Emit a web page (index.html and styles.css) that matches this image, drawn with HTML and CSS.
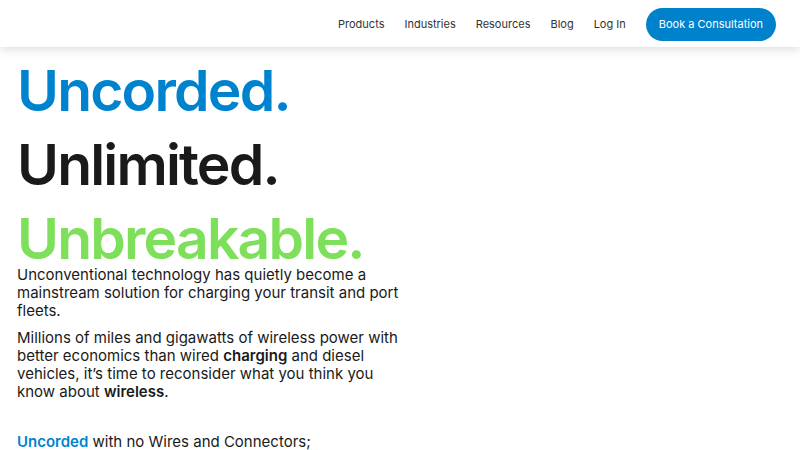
FILE: index.html
```html
<!DOCTYPE html>
<html lang="en">
    <head>
        <meta charset="UTF-8">
        <meta name="viewport" content="width=device-width, initial-scale=1.0">
        <title>Uncorded. Unlimited. Unbreakable.</title>
        <link rel="stylesheet" href="styles.css">
    </head>
    <body>
        <header class="site-header">
            <nav class="main-nav">
                <a href="#" class="nav-link">Products</a>
                <a href="#" class="nav-link">Industries</a>
                <a href="#" class="nav-link">Resources</a>
                <a href="#" class="nav-link">Blog</a>
                <a href="#" class="nav-link">Log In</a>
                <a href="#" class="btn-consult">Book a Consultation</a>
            </nav>
        </header>
        <main class="hero">
            <h1 class="hero-title">
                <span class="title-line blue">Uncorded.</span>
                <span class="title-line dark">Unlimited.</span>
                <span class="title-line green">Unbreakable.</span>
            </h1>
            <div class="hero-copy">
                <p>Unconventional technology has quietly become a mainstream solution for charging your transit and port fleets.</p>
                <p>Millions of miles and gigawatts of wireless power with better economics than wired <strong>charging</strong> and diesel vehicles, it&rsquo;s time to reconsider what you think you know about <strong>wireless</strong>.</p>
                <p class="point"><span class="accent">Uncorded</span> with no Wires and Connectors;</p>
            </div>
        </main>
    </body>
</html>
```

FILE: styles.css
```css
body {
    margin: 0;
    font-family: Inter, "Noto Sans", sans-serif;
    background-color: #fff;
    color: #1a1a1a;
}
.site-header {
    height: 46px;
    background-color: #fff;
    box-shadow: 0 2px 10px rgba(0, 0, 0, 0.15);
    display: flex;
    justify-content: flex-end;
    align-items: center;
    padding: 1px 24px 0;
    position: relative;
    z-index: 1;
}
.main-nav {
    display: flex;
    align-items: center;
    gap: 20px;
}
.nav-link {
    color: #333;
    font-size: 11px;
    text-decoration: none;
}
.btn-consult {
    background-color: #0081cc;
    color: #fff;
    font-size: 11px;
    text-decoration: none;
    padding: 0 13px;
    height: 33px;
    line-height: 33px;
    border-radius: 17px;
}
.hero {
    padding: 0 17px;
}
.hero-title {
    margin: 15px 0 0;
    display: flex;
    flex-direction: column;
    gap: 17px;
    font-size: 57px;
    font-weight: 600;
    line-height: 1;
    letter-spacing: -1.8px;
}
.blue {
    color: #0083cf;
}
.dark {
    color: #1a1a1a;
}
.green {
    color: #7ddf5a;
}
.hero-copy {
    width: 386px;
    margin-top: -1px;
    font-size: 15px;
    line-height: 18px;
}
.hero-copy p {
    margin: 0 0 9px;
}
.hero-copy strong {
    font-weight: 600;
}
.hero-copy .point {
    margin-top: 32px;
}
.accent {
    color: #0083cf;
    font-weight: 600;
}
```
